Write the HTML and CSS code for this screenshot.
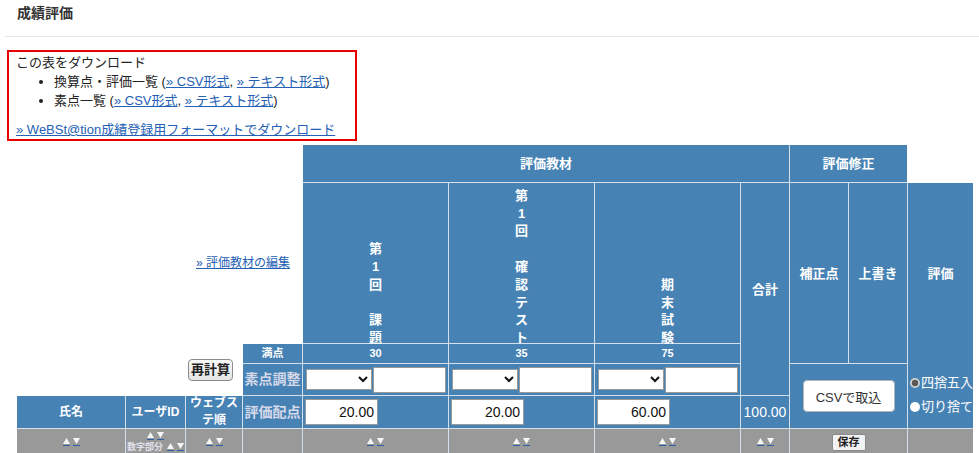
FILE: index.html
```html
<!DOCTYPE html>
<html lang="ja">
<head>
<meta charset="utf-8">
<title>成績評価</title>
<link rel="stylesheet" href="styles.css">
</head>
<body>
<header class="page-head">
  <h1 class="page-title">成績評価</h1>
</header>
<main class="content">
  <section class="download-box">
    <p class="dl-title">この表をダウンロード</p>
    <ul class="dl-list">
      <li>換算点・評価一覧 (<a href="#">» CSV形式</a>, <a href="#">» テキスト形式</a>)</li>
      <li>素点一覧 (<a href="#">» CSV形式</a>, <a href="#">» テキスト形式</a>)</li>
    </ul>
    <p class="dl-extra"><a href="#">» WeBSt@tion成績登録用フォーマットでダウンロード</a></p>
  </section>

  <div class="grade-grid">
    <!-- row 1 -->
    <div class="blank c1 r1 cs4"></div>
    <div class="cell c5 r1 cs4">評価教材</div>
    <div class="cell c9 r1 cs2">評価修正</div>
    <div class="blank c11 r1"></div>

    <!-- row 2 -->
    <div class="blank edit-cell c1 r2 cs4"><a class="edit-link" href="#">» 評価教材の編集</a></div>
    <div class="cell item-head c5 r2"><span class="vtext">第<br>1<br>回<br><br>課<br>題</span></div>
    <div class="cell item-head c6 r2"><span class="vtext">第<br>1<br>回<br><br>確<br>認<br>テ<br>ス<br>ト</span></div>
    <div class="cell item-head c7 r2"><span class="vtext">期<br>末<br>試<br>験</span></div>
    <div class="cell c8 r2 rs3">合計</div>
    <div class="cell c9 r2 rs2">補正点</div>
    <div class="cell c10 r2 rs2">上書き</div>
    <div class="cell grade-cell c11 r2 rs4">
      <div class="grade-label">評価</div>
      <div class="grade-options">
        <label class="radio"><input type="radio" name="round" checked><span>四捨五入</span></label>
        <label class="radio"><input type="radio" name="round"><span>切り捨て</span></label>
      </div>
    </div>

    <!-- rows 3-4 -->
    <div class="blank recalc-cell c1 r3 cs3 rs2"><button class="btn-recalc" type="button">再計算</button></div>
    <div class="cell small c4 r3">満点</div>
    <div class="cell small c5 r3">30</div>
    <div class="cell small c6 r3">35</div>
    <div class="cell small c7 r3">75</div>

    <div class="cell soft-label c4 r4">素点調整</div>
    <div class="cell field-cell c5 r4"><select class="adj-select"><option></option></select><input class="adj-input" type="text"></div>
    <div class="cell field-cell c6 r4"><select class="adj-select"><option></option></select><input class="adj-input" type="text"></div>
    <div class="cell field-cell c7 r4"><select class="adj-select"><option></option></select><input class="adj-input" type="text"></div>
    <div class="cell c9 r4 cs2 rs2"><button class="btn-csv" type="button">CSVで取込</button></div>

    <!-- row 5 -->
    <div class="cell col-head c1 r5">氏名</div>
    <div class="cell col-head c2 r5">ユーザID</div>
    <div class="cell col-head c3 r5">ウェブステ順</div>
    <div class="cell soft-label c4 r5">評価配点</div>
    <div class="cell weight-cell c5 r5"><input class="weight-input" type="text" value="20.00"></div>
    <div class="cell weight-cell c6 r5"><input class="weight-input" type="text" value="20.00"></div>
    <div class="cell weight-cell c7 r5"><input class="weight-input" type="text" value="60.00"></div>
    <div class="cell total-value c8 r5">100.00</div>

    <!-- row 6 -->
    <div class="sort-cell c1 r6"><span class="sort"><a class="arr" href="#"><svg width="7" height="6" viewBox="0 0 7 6"><path d="M3.5 0L7 6H0Z"/></svg></a><a class="arr" href="#"><svg width="7" height="6" viewBox="0 0 7 6"><path d="M0 0H7L3.5 6Z"/></svg></a></span></div>
    <div class="sort-cell stack c2 r6">
      <span class="sort"><a class="arr" href="#"><svg width="7" height="6" viewBox="0 0 7 6"><path d="M3.5 0L7 6H0Z"/></svg></a><a class="arr" href="#"><svg width="7" height="6" viewBox="0 0 7 6"><path d="M0 0H7L3.5 6Z"/></svg></a></span>
      <span class="sort-line"><span class="num-part">数字部分</span><span class="sort"><a class="arr" href="#"><svg width="7" height="6" viewBox="0 0 7 6"><path d="M3.5 0L7 6H0Z"/></svg></a><a class="arr" href="#"><svg width="7" height="6" viewBox="0 0 7 6"><path d="M0 0H7L3.5 6Z"/></svg></a></span></span>
    </div>
    <div class="sort-cell c3 r6"><span class="sort"><a class="arr" href="#"><svg width="7" height="6" viewBox="0 0 7 6"><path d="M3.5 0L7 6H0Z"/></svg></a><a class="arr" href="#"><svg width="7" height="6" viewBox="0 0 7 6"><path d="M0 0H7L3.5 6Z"/></svg></a></span></div>
    <div class="sort-cell c4 r6"></div>
    <div class="sort-cell c5 r6"><span class="sort"><a class="arr" href="#"><svg width="7" height="6" viewBox="0 0 7 6"><path d="M3.5 0L7 6H0Z"/></svg></a><a class="arr" href="#"><svg width="7" height="6" viewBox="0 0 7 6"><path d="M0 0H7L3.5 6Z"/></svg></a></span></div>
    <div class="sort-cell c6 r6"><span class="sort"><a class="arr" href="#"><svg width="7" height="6" viewBox="0 0 7 6"><path d="M3.5 0L7 6H0Z"/></svg></a><a class="arr" href="#"><svg width="7" height="6" viewBox="0 0 7 6"><path d="M0 0H7L3.5 6Z"/></svg></a></span></div>
    <div class="sort-cell c7 r6"><span class="sort"><a class="arr" href="#"><svg width="7" height="6" viewBox="0 0 7 6"><path d="M3.5 0L7 6H0Z"/></svg></a><a class="arr" href="#"><svg width="7" height="6" viewBox="0 0 7 6"><path d="M0 0H7L3.5 6Z"/></svg></a></span></div>
    <div class="sort-cell c8 r6"><span class="sort"><a class="arr" href="#"><svg width="7" height="6" viewBox="0 0 7 6"><path d="M3.5 0L7 6H0Z"/></svg></a><a class="arr" href="#"><svg width="7" height="6" viewBox="0 0 7 6"><path d="M0 0H7L3.5 6Z"/></svg></a></span></div>
    <div class="sort-cell c9 r6 cs2"><button class="btn-save" type="button">保存</button></div>
    <div class="sort-cell c11 r6"></div>
  </div>
</main>
</body>
</html>
```

FILE: styles.css
```css
html, body {
  margin: 0;
  padding: 0;
  overflow: hidden;
}
body {
  font-family: "Liberation Sans", "Noto Sans CJK JP", sans-serif;
  font-size: 13px;
  color: #222;
  background: #fff;
}
a { color: #2460b4; }

.page-head {
  margin-left: 5px;
  height: 37px;
  box-sizing: border-box;
  padding-left: 12px;
  border-bottom: 1px solid #e6e6e6;
}
.page-title {
  margin: 0;
  padding-top: 3px;
  font-size: 14px;
  line-height: 20px;
  font-weight: bold;
  color: #333;
}

.content { padding-top: 13px; }

.download-box {
  margin-left: 7px;
  width: 350px;
  height: 91px;
  box-sizing: border-box;
  border: 2px solid #e60000;
  padding: 1px 7px 0;
  line-height: 19px;
}
.dl-title { margin: 0; }
.dl-list {
  margin: 0 0 10px;
  padding-left: 38px;
  list-style: disc;
}
.dl-extra { margin: 0; }

.grade-grid {
  margin-top: 4px;
  margin-left: 17px;
  display: grid;
  grid-template-columns: 108px 59px 56px 59px 145px 145px 145px 48px 58px 58px 65px;
  grid-template-rows: 37px 160px 19px 31px 32px 26px;
  gap: 1px;
  width: max-content;
  background: #d6e0ea;
}

.c1 { grid-column-start: 1; }
.c2 { grid-column-start: 2; }
.c3 { grid-column-start: 3; }
.c4 { grid-column-start: 4; }
.c5 { grid-column-start: 5; }
.c6 { grid-column-start: 6; }
.c7 { grid-column-start: 7; }
.c8 { grid-column-start: 8; }
.c9 { grid-column-start: 9; }
.c10 { grid-column-start: 10; }
.c11 { grid-column-start: 11; }
.r1 { grid-row-start: 1; }
.r2 { grid-row-start: 2; }
.r3 { grid-row-start: 3; }
.r4 { grid-row-start: 4; }
.r5 { grid-row-start: 5; }
.r6 { grid-row-start: 6; }
.cs2 { grid-column-end: span 2; }
.cs3 { grid-column-end: span 3; }
.cs4 { grid-column-end: span 4; }
.rs2 { grid-row-end: span 2; }
.rs3 { grid-row-end: span 3; }
.rs4 { grid-row-end: span 4; }

.blank {
  background: #fff;
  box-shadow: 0 0 0 1px #fff;
}
.cell {
  background: #4682b4;
  color: #fff;
  display: flex;
  align-items: center;
  justify-content: center;
  text-align: center;
  font-size: 13px;
  font-weight: bold;
  line-height: 17px;
}

.edit-cell {
  display: flex;
  align-items: center;
  justify-content: flex-end;
  padding-right: 12px;
}
.edit-link {
  font-size: 12px;
  line-height: 18px;
}

.item-head {
  align-items: flex-end;
  line-height: 17.8px;
}
.vtext {
  margin-bottom: -4px;
}

.recalc-cell {
  display: flex;
  align-items: center;
  justify-content: flex-end;
  padding-right: 9px;
}
.btn-recalc {
  height: 22px;
  padding: 0 2px;
  font-family: inherit;
  font-size: 13px;
  font-weight: bold;
  line-height: 18px;
  color: #222;
  background: linear-gradient(#f9f9f9, #e4e4e4);
  border: 1px solid #8c8c8c;
  border-radius: 4px;
}

.small {
  font-size: 11px;
  line-height: 19px;
}
.soft-label {
  font-size: 14px;
  color: #d6d9ea;
}
.col-head { font-size: 12px; }

.field-cell {
  justify-content: flex-start;
  padding-left: 3px;
  gap: 1px;
}
.adj-select {
  width: 66px;
  height: 21px;
  margin: 0;
  font-size: 13px;
  background: #fff;
  border: 1px solid #9a9a9a;
  border-radius: 0;
  color: #111;
}
.adj-input {
  width: 73px;
  height: 26px;
  margin: 0;
  box-sizing: border-box;
  border: 1px solid #9a9a9a;
  background: #fff;
  font-size: 14px;
}

.weight-cell {
  justify-content: flex-start;
  padding-left: 2px;
}
.weight-input {
  width: 73px;
  height: 26px;
  margin: 0;
  box-sizing: border-box;
  border: 1px solid #9a9a9a;
  background: #fff;
  padding: 0 3px;
  text-align: right;
  font-family: inherit;
  font-size: 14px;
  color: #111;
}

.total-value {
  font-size: 14px;
  font-weight: normal;
}

.btn-csv {
  width: 92px;
  height: 32px;
  padding: 0;
  font-family: inherit;
  font-size: 13px;
  color: #333;
  background: #fff;
  border: 1px solid #b5b5b5;
  border-radius: 4px;
}

.grade-cell {
  display: grid;
  grid-template-rows: 181px 1fr;
  align-items: stretch;
  justify-content: stretch;
}
.grade-label {
  display: flex;
  align-items: center;
  justify-content: center;
}
.grade-options {
  display: flex;
  flex-direction: column;
  justify-content: center;
  padding-left: 2px;
  padding-bottom: 3px;
  font-weight: normal;
}
.radio {
  display: flex;
  align-items: center;
  height: 24px;
  font-size: 13px;
  white-space: nowrap;
}
.radio input {
  appearance: none;
  width: 10px;
  height: 10px;
  margin: 0 1px 0 0;
  border-radius: 50%;
  background: #fff;
}
.radio input:checked {
  background: radial-gradient(circle, #5a5a5a 0 3px, #cfcfcf 3.6px);
}

.sort-cell {
  background: #999;
  display: flex;
  align-items: center;
  justify-content: center;
}
.sort-cell.stack {
  flex-direction: column;
}
.sort {
  display: inline-flex;
  gap: 3px;
}
.arr {
  display: block;
  width: 7px;
  padding-bottom: 1px;
  border-bottom: 1px solid #2e5fa8;
}
.arr svg {
  display: block;
  fill: #f6f6f6;
}
.sort-line {
  display: flex;
  align-items: center;
  gap: 4px;
  margin-top: 2px;
}
.num-part {
  font-size: 9px;
  line-height: 11px;
  font-weight: bold;
  color: #e2e2ee;
}
.btn-save {
  height: 17px;
  padding: 0 5px;
  font-family: inherit;
  font-size: 11px;
  font-weight: bold;
  line-height: 15px;
  color: #222;
  background: #f2f2f2;
  border: 1px solid #8a8a8a;
  border-radius: 2px;
}
```
